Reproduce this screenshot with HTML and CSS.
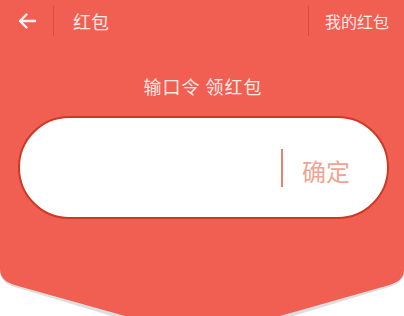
FILE: index.html
```html
<!DOCTYPE html>
<html lang="zh">
<head>
<meta charset="utf-8">
<link rel="stylesheet" href="styles.css">
</head>
<body>
<div class="page">
  <div class="panel">
    <header class="topbar">
      <div class="back">
        <svg width="20" height="18" viewBox="0 0 20 18"><path d="M18 9H3M9.5 2.5L3 9l6.5 6.5" fill="none" stroke="#fdf1ee" stroke-width="2.4" stroke-linecap="round" stroke-linejoin="round"/></svg>
      </div>
      <div class="title">红包</div>
      <div class="spacer"></div>
      <div class="mine">我的红包</div>
    </header>
    <div class="headline">输口令 领红包</div>
    <div class="pill">
      <span class="cursor"></span>
      <span class="ok">确定</span>
    </div>
  </div>
  <svg class="cap" width="404" height="54" viewBox="0 0 404 54">
    <path d="M0 0H404V8C404 16 398 21 386 24L280 56H125L18 24C6 21 0 16 0 7Z" fill="#dedede" transform="translate(0 2)"/>
    <path d="M0 0H404V8C404 16 398 21 386 24L280 54H125L18 24C6 21 0 16 0 7Z" fill="#f05f52"/>
  </svg>
</div>
</body>
</html>
```
FILE: styles.css
```css
html, body {
  margin: 0;
  padding: 0;
  background: #ffffff;
}
body {
  font-family: "Noto Sans CJK SC", "Noto Sans", sans-serif;
  width: 404px;
  height: 316px;
  overflow: hidden;
}
.page {
  display: flex;
  flex-direction: column;
}
.panel {
  background: #f05f52;
  display: flex;
  flex-direction: column;
  padding-bottom: 43px;
}
.topbar {
  height: 42px;
  display: flex;
  align-items: center;
  color: #fceae6;
  font-size: 16px;
}
.back {
  width: 54px;
  height: 30px;
  box-sizing: border-box;
  border-right: 1px solid #d94c40;
  display: flex;
  align-items: center;
  justify-content: center;
}
.back svg {
  display: block;
  margin-left: 1px;
}
.title {
  padding-left: 19px;
  font-size: 18px;
  line-height: 24px;
}
.spacer {
  flex: 1;
}
.mine {
  height: 30px;
  border-left: 1px solid #d94c40;
  padding-left: 16px;
  padding-right: 15px;
  display: flex;
  align-items: center;
  line-height: 22px;
}
.headline {
  margin-top: 32px;
  text-align: center;
  color: #fceae6;
  font-size: 18px;
  line-height: 24px;
  letter-spacing: 1px;
  padding-left: 2px;
}
.pill {
  margin: 18px 15px 0 18px;
  height: 103px;
  box-sizing: border-box;
  border: 2px solid #cc3a24;
  border-radius: 52px;
  background: #ffffff;
  display: flex;
  align-items: center;
  justify-content: flex-end;
  padding-right: 37px;
}
.cursor {
  width: 2px;
  height: 38px;
  background: #e98270;
  margin-right: 19px;
}
.ok {
  font-size: 24px;
  line-height: 30px;
  color: #efa494;
  margin-top: 6px;
}
.cap {
  display: block;
}
```
